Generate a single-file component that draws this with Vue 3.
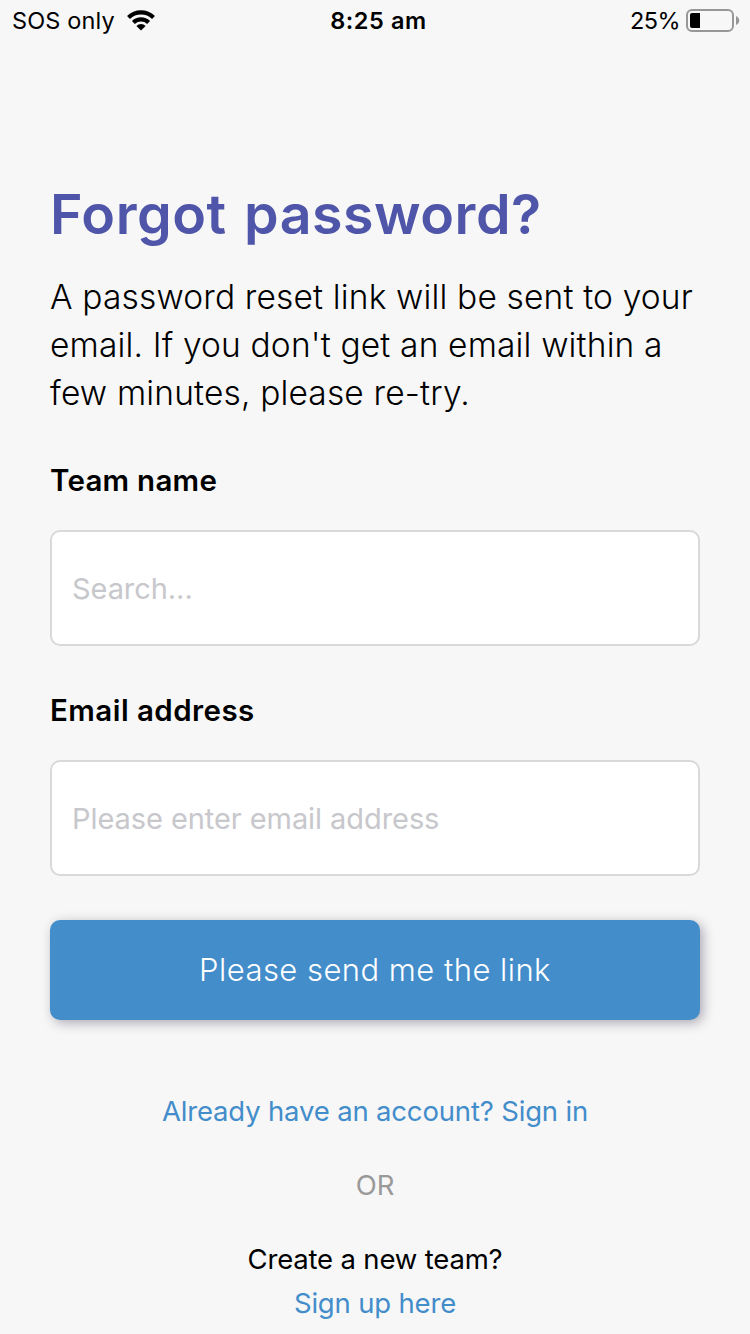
<script setup>
import { ref } from 'vue'

const team = ref('')
const email = ref('')
const battery = ref(25)
</script>

<template>
  <div class="screen">
    <header class="status-bar">
      <div class="status-left">
        <span class="carrier">SOS only</span>
        <svg class="wifi" width="28" height="21" viewBox="0 0 28 21">
          <path d="M14 20.5 9.4 15.9a6.6 6.6 0 0 1 9.2 0Z" />
          <path class="arc" d="M6.4 12.5a11 11 0 0 1 15.2 0" />
          <path class="arc" d="M1.5 7.4a18 18 0 0 1 25 0" />
        </svg>
      </div>
      <div class="clock">8:25 am</div>
      <div class="status-right">
        <span class="percent">{{ battery }}%</span>
        <div class="battery">
          <div class="battery-level" :style="{ width: `${battery}%` }"></div>
        </div>
        <svg class="battery-tip" width="4" height="9" viewBox="0 0 4 9">
          <path d="M0 0c2 .8 3.2 2.4 3.2 4.5S2 8.2 0 9Z" />
        </svg>
      </div>
    </header>

    <main class="content">
      <h1 class="title">Forgot password?</h1>
      <p class="intro">
        A password reset link will be sent to your email. If you don't get an email within a few
        minutes, please re-try.
      </p>
      <form @submit.prevent>
        <label class="label label-team" for="team">Team name</label>
        <input id="team" v-model="team" class="input" type="text" placeholder="Search..." />
        <label class="label label-email" for="email">Email address</label>
        <input
          id="email"
          v-model="email"
          class="input"
          type="text"
          placeholder="Please enter email address"
        />
        <button class="submit" type="submit">Please send me the link</button>
      </form>
      <div class="links">
        <a class="link">Already have an account? Sign in</a>
        <span class="or">OR</span>
        <span class="create">Create a new team?</span>
        <a class="link sign-up">Sign up here</a>
      </div>
    </main>
  </div>
</template>

<style>
body {
  background-color: #f7f7f7;
}
</style>

<style scoped>
.screen {
  box-sizing: border-box;
  height: 1334px;
  overflow: hidden;
  background-color: #f7f7f7;
  color: #000;
  font-family: Inter, 'Liberation Sans', sans-serif;
}
.status-bar {
  box-sizing: border-box;
  display: grid;
  grid-template-columns: 1fr auto 1fr;
  align-items: center;
  height: 40px;
  padding: 0 10px 0 12px;
  font-size: 23.5px;
  line-height: 38px;
}
.status-left,
.status-right {
  display: flex;
  align-items: center;
}
.status-right {
  justify-content: flex-end;
}
.carrier,
.clock,
.percent {
  padding-top: 2px;
}
.carrier {
  letter-spacing: 0.15px;
}
.wifi {
  margin-left: 12px;
}
.arc {
  fill: none;
  stroke: #000;
  stroke-width: 4.2;
}
.clock {
  padding-left: 5px;
  font-weight: 600;
  letter-spacing: 0.6px;
}
.percent {
  letter-spacing: -0.6px;
}
.battery {
  box-sizing: border-box;
  width: 48px;
  height: 23px;
  margin-left: 6px;
  padding: 2px;
  border: 2px solid #979797;
  border-radius: 6px;
}
.battery-level {
  height: 100%;
  background-color: #000;
  border-radius: 2px 0 0 2px;
}
.battery-tip {
  margin-left: 2px;
  fill: #979797;
}
.content {
  padding: 141px 50px 0;
}
.title {
  margin: 0;
  color: #4f55a8;
  font-size: 55.5px;
  font-weight: 600;
  line-height: 66px;
  letter-spacing: 0.5px;
  word-spacing: 3px;
}
.intro {
  margin: 26px 0 0;
  font-size: 33.5px;
  font-weight: 300;
  line-height: 48px;
  letter-spacing: 0.16px;
}
.label {
  display: block;
  height: 36px;
  font-size: 29.5px;
  font-weight: 600;
  line-height: 36px;
}
.label-team {
  margin-top: 45px;
  letter-spacing: 0.25px;
}
.label-email {
  margin-top: 46px;
  letter-spacing: 0.45px;
}
.input {
  box-sizing: border-box;
  display: block;
  width: 100%;
  height: 116px;
  margin: 32px 0 0;
  padding: 0 20px;
  background-color: #fff;
  border: 2px solid #d9d9da;
  border-radius: 10px;
  outline: none;
  font-family: inherit;
  font-size: 29px;
  letter-spacing: -0.07px;
}
.input::placeholder {
  color: #c7c7cc;
  opacity: 1;
}
.submit {
  display: block;
  width: 100%;
  height: 100px;
  margin: 44px 0 0;
  padding: 0 0 2px;
  background-color: #438dcb;
  border: none;
  border-radius: 10px;
  box-shadow: 3px 3px 12px rgba(40, 30, 60, 0.36);
  color: #fff;
  font-family: inherit;
  font-size: 31px;
  font-weight: 300;
  letter-spacing: 0.46px;
}
.links {
  display: flex;
  flex-direction: column;
  align-items: center;
  margin-top: 74px;
  font-size: 27.5px;
  line-height: 34px;
  letter-spacing: -0.17px;
}
.link {
  color: #438dcb;
}
.or {
  margin-top: 40px;
  color: #999;
}
.create {
  margin-top: 40px;
}
.sign-up {
  margin-top: 10px;
}
</style>
